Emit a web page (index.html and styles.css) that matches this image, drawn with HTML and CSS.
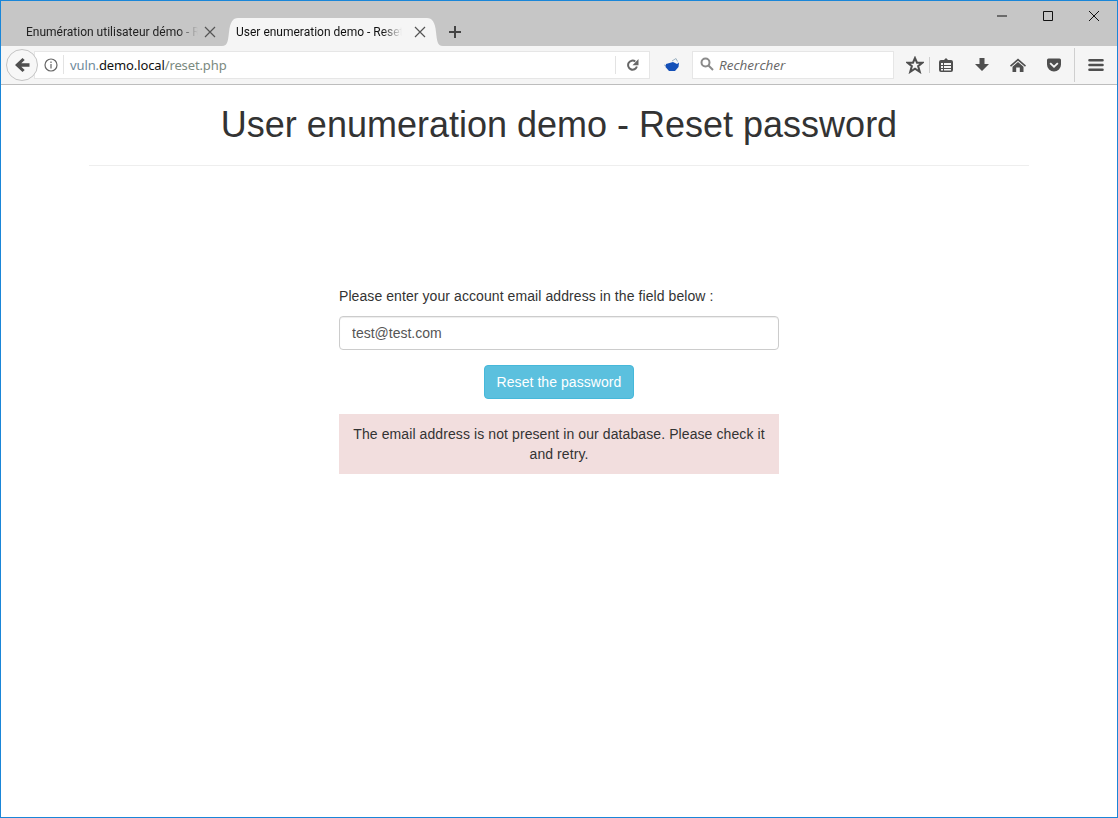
FILE: index.html
```html
<!DOCTYPE html>
<html lang="en">
<head>
    <meta charset="UTF-8">
    <title>User enumeration demo - Reset password</title>
    <link rel="stylesheet" href="styles.css">
</head>
<body>
    <div class="window">
        <div class="titlebar">
            <div class="tabs">
                <div class="tab">
                    <span class="tab-title">Enumération utilisateur démo - Reset</span>
                    <svg class="tab-close" viewBox="0 0 12 12"><path d="M1 1L11 11M11 1L1 11"/></svg>
                </div>
                <div class="tab tab-active">
                    <span class="tab-title">User enumeration demo - Reset password</span>
                    <svg class="tab-close" viewBox="0 0 12 12"><path d="M1 1L11 11M11 1L1 11"/></svg>
                </div>
                <svg class="tab-new" viewBox="0 0 12 12"><path d="M6 0V12M0 6H12"/></svg>
            </div>
            <div class="window-buttons">
                <svg class="win-btn" viewBox="0 0 10 10"><path d="M0 5H10"/></svg>
                <svg class="win-btn" viewBox="0 0 10 10"><path d="M.5 .5H9.5V9.5H.5Z"/></svg>
                <svg class="win-btn" viewBox="0 0 10 10"><path d="M0 0L10 10M10 0L0 10"/></svg>
            </div>
        </div>
        <div class="navbar">
            <div class="back">
                <svg viewBox="0 0 16 16"><path d="M8.500 1L1 8L8.500 15L10.700 12.900L7.300 9.800H15.500V6.200H7.300L10.700 3.100Z"/></svg>
            </div>
            <div class="urlbar">
                <svg class="info" viewBox="0 0 14 14"><circle cx="7" cy="7" r="6"/><path d="M7 6V10.500M7 3.400V5"/></svg>
                <div class="url"><span class="url-host">vuln.</span><span class="url-domain">demo.local</span><span class="url-path">/reset.php</span></div>
                <svg class="reload" viewBox="1 1 12 12"><path d="M11.400 8.500A4.500 4.500 0 1 1 9.800 3.500"/><path class="fill" d="M13 1V7.200H7Z"/></svg>
            </div>
            <svg class="ext" viewBox="0 0 18 16"><path class="ext-wing" d="M9 4L13 1.500L14.500 4.500M1 8L4 9"/><path d="M3 7L10 5L14 7L16 5.500L15.500 10L12 14H6L2.500 10Z"/></svg>
            <div class="searchbar">
                <svg class="search-icon" viewBox="0 0 14 14"><circle cx="5.500" cy="5.500" r="4"/><path d="M8.500 8.500L13 13"/></svg>
                <span class="search-text">Rechercher</span>
            </div>
            <div class="tools">
                <svg class="tool tool-star" viewBox="0 0 16 16"><path d="M8 1.800L9.800 6H14.500L10.800 9L12.200 14L8 11.200L3.800 14L5.200 9L1.500 6H6.200Z"/></svg>
                <span class="tool-sep"></span>
                <svg class="tool" viewBox="0 0 16 16"><path d="M3 3H6L8 1L10 3H13A2 2 0 0 1 15 5V13A2 2 0 0 1 13 15H3A2 2 0 0 1 1 13V5A2 2 0 0 1 3 3ZM3 6V8H5V6ZM6 6V8H13V6ZM3 9V11H5V9ZM6 9V11H13V9ZM3 12V13.500H5V12ZM6 12V13.500H13V12Z" fill-rule="evenodd"/></svg>
                <svg class="tool" viewBox="0 0 16 16"><path d="M5.500 1H10.500V7H15L8 14L1 7H5.500Z"/></svg>
                <svg class="tool" viewBox="0 0 16 16"><path d="M8 1.500L16 8.500L15 9.700L8 3.800L1 9.700L0 8.500ZM8 5L13.500 9.700V15H9.800V10.500H6.200V15H2.500V9.700Z"/></svg>
                <svg class="tool" viewBox="0 0 16 16"><path d="M2.500 1.500H13.500A1.500 1.500 0 0 1 15 3V7.500A7 7 0 0 1 1 7.500V3A1.500 1.500 0 0 1 2.500 1.500ZM4.800 5.500L3.500 6.800L8 11L12.500 6.800L11.200 5.500L8 8.500Z" fill-rule="evenodd"/></svg>
                <span class="tool-sep tool-sep-tall"></span>
                <svg class="tool tool-menu" viewBox="0 0 16 16"><path d="M1.500 2H14.500A1.300 1.300 0 0 1 14.500 4.600H1.500A1.300 1.300 0 0 1 1.500 2ZM1.500 6.700H14.500A1.300 1.300 0 0 1 14.500 9.300H1.500A1.300 1.300 0 0 1 1.500 6.700ZM1.500 11.400H14.500A1.300 1.300 0 0 1 14.500 14H1.500A1.300 1.300 0 0 1 1.500 11.400Z"/></svg>
            </div>
        </div>
        <main class="page">
            <div class="page-header">
                <h1>User enumeration demo - Reset password</h1>
            </div>
            <form class="reset-form">
                <label for="email">Please enter your account email address in the field below :</label>
                <input class="input" id="email" type="text" value="test@test.com">
                <button class="btn" type="button">Reset the password</button>
                <div class="alert">The email address is not present in our database. Please check it and retry.</div>
            </form>
        </main>
    </div>
</body>
</html>
```
FILE: styles.css
```css
html, body {
    margin: 0;
    height: 100%;
}
* {
    box-sizing: border-box;
}
body {
    background-color: #fff;
    font-family: "Liberation Sans", Arial, sans-serif;
    font-size: 14px;
    color: #333;
}
svg {
    display: block;
    flex: none;
}
.window {
    height: 818px;
    border: 1px solid #1a86d8;
    display: flex;
    flex-direction: column;
    overflow: hidden;
}
/* title bar and tabs */
.titlebar {
    height: 45px;
    background-color: #c6c6c6;
    display: flex;
    justify-content: space-between;
}
.tabs {
    display: flex;
    align-items: stretch;
    padding-top: 17px;
    padding-left: 15px;
}
.tab {
    width: 206px;
    padding: 0 6px 0 10px;
    display: flex;
    align-items: center;
    font-family: Roboto, sans-serif;
    font-size: 12px;
    color: #222;
}
.tab-active {
    width: 221px;
    padding: 0 17px 0 14px;
    background-color: #f5f5f5;
    clip-path: path("M0 28C6 28 6 22 7 14C8 4 11 0 16 0H205C210 0 213 4 214 14C215 22 215 28 221 28Z");
    color: #111;
}
.tab-title {
    flex: 1;
    min-width: 0;
    overflow: hidden;
    white-space: nowrap;
    -webkit-mask-image: linear-gradient(to right, #000 88%, transparent 100%);
    mask-image: linear-gradient(to right, #000 88%, transparent 100%);
}
.tab-close {
    width: 12px;
    height: 12px;
    margin-left: 6px;
    fill: none;
    stroke: #555;
    stroke-width: 1.200;
}
.tab-active .tab-close {
    margin-left: 12px;
}
.tab-new {
    width: 12px;
    height: 12px;
    margin: 8px 0 0 6px;
    fill: none;
    stroke: #444;
    stroke-width: 2;
}
.window-buttons {
    display: flex;
    gap: 36px;
    padding: 10px 18px 0 0;
}
.win-btn {
    width: 10px;
    height: 10px;
    fill: none;
    stroke: #111;
    stroke-width: 1;
}
/* navigation bar */
.navbar {
    height: 39px;
    background-color: #f5f5f5;
    border-bottom: 1px solid #bdbdbd;
    display: flex;
    align-items: center;
    padding: 0 0 1px 5px;
}
.back {
    width: 32px;
    height: 32px;
    border-radius: 50%;
    background-color: #f7f7f7;
    border: 1px solid #c4c4c4;
    display: flex;
    align-items: center;
    justify-content: center;
    z-index: 1;
}
.back svg {
    width: 16px;
    height: 16px;
    fill: #4f4f4f;
}
.urlbar {
    width: 616px;
    height: 28px;
    margin-left: -4px;
    background-color: #fff;
    border: 1px solid #e6e6e6;
    display: flex;
    align-items: center;
    padding-left: 9px;
}
.info {
    width: 14px;
    height: 14px;
    fill: none;
    stroke: #666;
    stroke-width: 1.200;
}
.url {
    flex: 1;
    margin-left: 5px;
    padding-left: 6px;
    border-left: 1px solid #e3e3e3;
    font-family: "Noto Sans", sans-serif;
    font-size: 13px;
    line-height: 18px;
    letter-spacing: -.12px;
    white-space: nowrap;
    padding-top: 1px;
}
.url-host {
    color: #6f8a9b;
}
.url-domain {
    color: #111;
}
.url-path {
    color: #7b8a80;
}
.reload {
    width: 34px;
    height: 18px;
    padding: 3px 10px;
    border-left: 1px solid #e3e3e3;
    fill: none;
    stroke: #666;
    stroke-width: 2;
}
.reload .fill {
    fill: #666;
    stroke: none;
}
.ext {
    width: 18px;
    height: 16px;
    margin-left: 13px;
    fill: #1450b8;
}
.ext-wing {
    fill: none;
    stroke: #9fb4c4;
    stroke-width: 1;
}
.searchbar {
    width: 202px;
    height: 28px;
    margin-left: 11px;
    background-color: #fff;
    border: 1px solid #e6e6e6;
    display: flex;
    align-items: center;
    padding-left: 7px;
    gap: 5px;
}
.search-icon {
    width: 14px;
    height: 14px;
    margin-top: -2px;
    fill: none;
    stroke: #8a8a8a;
    stroke-width: 2;
}
.search-text {
    padding-top: 1px;
    font-family: "Open Sans", sans-serif;
    font-style: italic;
    font-size: 13.500px;
    color: #666;
}
.tools {
    display: flex;
    align-items: center;
    margin-left: 12px;
}
.tool {
    width: 16px;
    height: 16px;
    margin-right: 20px;
    fill: #4f4f4f;
}
.tool-star {
    width: 18px;
    height: 18px;
    margin-right: 5px;
    fill: none;
    stroke: #4f4f4f;
    stroke-width: 1.800;
}
.tool-sep {
    width: 1px;
    height: 16px;
    background-color: #cfcfcf;
    margin-right: 8px;
}
.tool-sep-tall {
    height: 34px;
    margin: 0 13px 0 -8px;
}
.tool-menu {
    margin-right: 0;
}
/* page */
.page {
    flex: 1;
    background-color: #fff;
}
.page-header {
    width: 940px;
    height: 81px;
    margin: 0 auto;
    border-bottom: 1px solid #eee;
    padding-top: 20px;
}
h1 {
    margin: 0;
    font-size: 36px;
    font-weight: 500;
    line-height: 40px;
    text-align: center;
    color: #333;
}
.reset-form {
    width: 440px;
    margin: 120px 0 0 338px;
    display: flex;
    flex-direction: column;
    align-items: center;
}
label {
    align-self: flex-start;
    line-height: 20px;
    margin-bottom: 10px;
    letter-spacing: .08px;
}
.input {
    width: 100%;
    height: 34px;
    padding: 6px 12px;
    border: 1px solid #ccc;
    border-radius: 4px;
    font-family: inherit;
    font-size: 14px;
    color: #555;
    box-shadow: inset 0 1px 1px rgba(0, 0, 0, .075);
}
.btn {
    height: 34px;
    margin-top: 15px;
    padding: 6px 12px;
    background-color: #5bc0de;
    border: 1px solid #46b8da;
    border-radius: 4px;
    font-family: inherit;
    font-size: 14px;
    letter-spacing: .06px;
    color: #fff;
}
.alert {
    width: 100%;
    margin-top: 15px;
    padding: 10px;
    background-color: #f2dede;
    text-align: center;
    line-height: 20px;
    letter-spacing: .09px;
}
```
